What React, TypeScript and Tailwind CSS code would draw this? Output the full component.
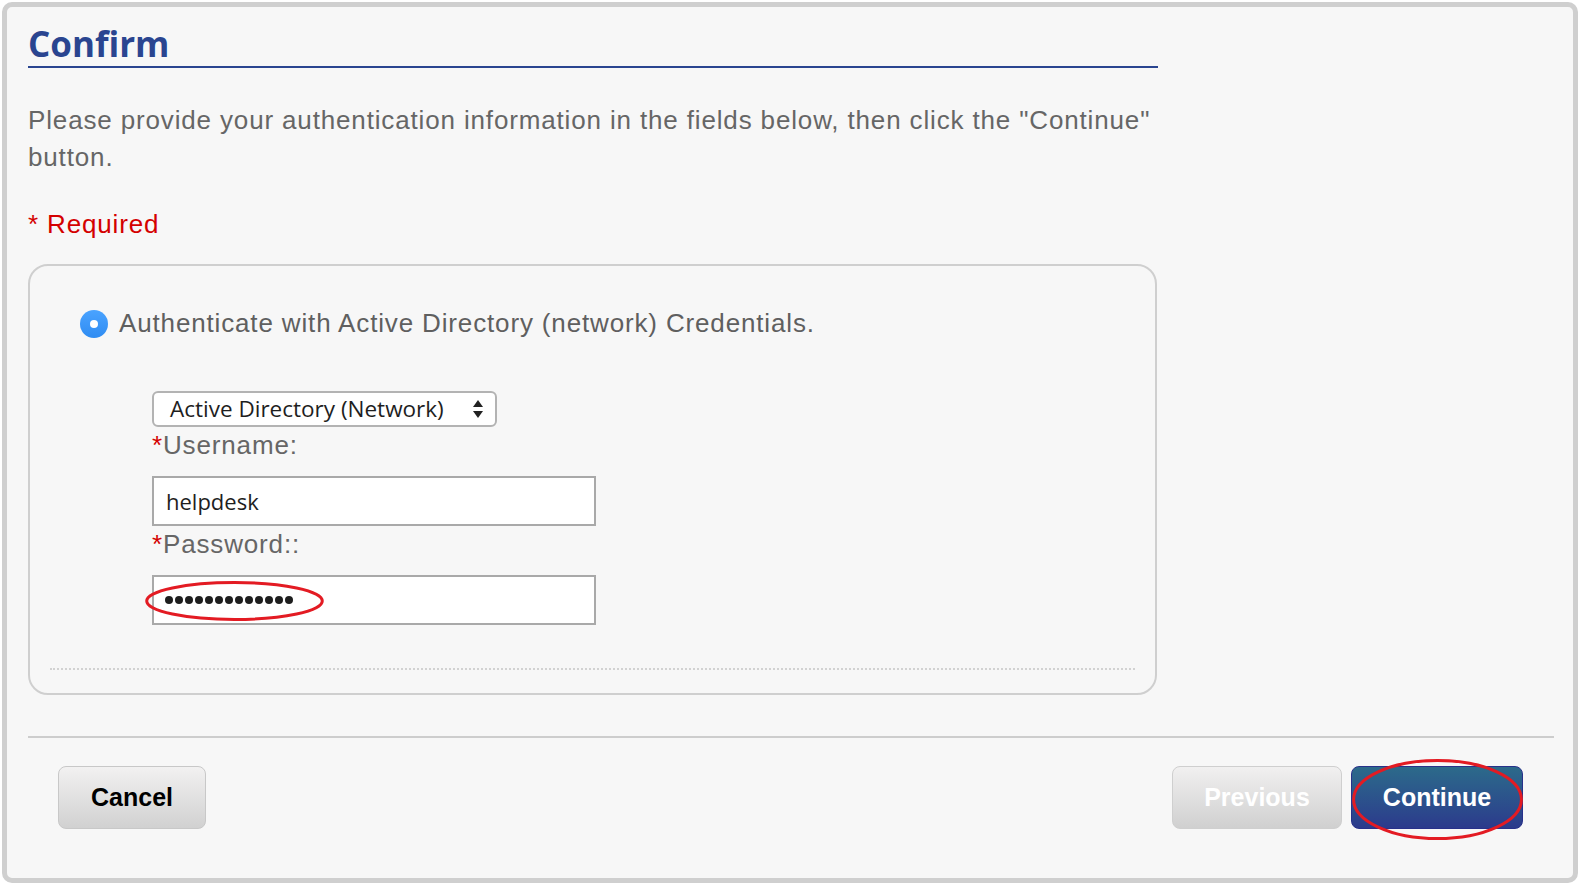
import React from 'react';

const Ellipse: React.FC<{ className: string }> = ({ className }) => (
  <svg className={`pointer-events-none absolute ${className}`} viewBox="0 0 100 100" preserveAspectRatio="none" fill="none">
    <ellipse cx="50" cy="50" rx="48.5" ry="46" stroke="#e31b23" strokeWidth="3" vectorEffect="non-scaling-stroke" />
  </svg>
);

const App: React.FC = () => {
  const dots = Array.from({ length: 13 });

  return (
    <div className="h-screen w-full bg-white pt-[2px] pl-[2px] pr-[4px] pb-[3px] font-['Liberation_Sans',Arial,sans-serif]">
      <div className="h-full rounded-[10px] border-[5px] border-[#cfcfcf] bg-[#f7f7f7] pl-[21px] pr-[19px] pt-[17px]">
        <div className="w-[1130px]">
          <h1 className="border-b-2 border-[#2a4590] pb-[2px] font-['Open_Sans',sans-serif] text-[35px] font-bold leading-[40px] text-[#2a4590]">
            Confirm
          </h1>

          <p className="mt-[34px] text-[26px] leading-[37px] tracking-[0.85px] text-[#666]">
            Please provide your authentication information in the fields below, then click the "Continue" button.
          </p>

          <p className="mt-[30px] text-[26px] leading-[37px] tracking-[0.85px] text-[#d40000]">* Required</p>

          {/* auth method box */}
          <div className="mt-[21px] h-[431px] w-[1129px] rounded-[20px] border-2 border-[#cfcfcf] pt-[39px] pb-[20px]">
            <label className="flex h-[37px] items-center gap-[11px] pl-[50px] text-[26px] leading-[37px] tracking-[0.85px] text-[#5f5f5f]">
              <span className="flex h-[28px] w-[28px] items-center justify-center rounded-full bg-gradient-to-b from-[#4aa3ff] to-[#2f8cf2]">
                <span className="h-[8px] w-[8px] rounded-full bg-white" />
              </span>
              Authenticate with Active Directory (network) Credentials.
            </label>

            <div className="mt-[49px] pl-[122px]">
              <div className="flex h-[36px] w-[345px] items-center justify-between rounded-[6px] border-2 border-[#b3b3b3] bg-white pl-[16px] pr-[12px] font-['Open_Sans',sans-serif] text-[22.5px] text-[#1e1e1e]">
                <span>Active Directory (Network)</span>
                <svg width="10" height="20" viewBox="0 0 10 20" className="text-[#222]">
                  <path d="M5 1 L10 8 L0 8 Z" fill="currentColor" />
                  <path d="M0 12 L10 12 L5 19 Z" fill="currentColor" />
                </svg>
              </div>

              <div className="text-[26px] leading-[37px] tracking-[0.85px] text-[#666]">
                <span className="text-[#d40000]">*</span>Username:
              </div>
              <div className="mt-[12px] flex h-[50px] w-[444px] items-center border-2 border-[#a9a9a9] bg-white pl-[12px] font-['Open_Sans',sans-serif] text-[22px] text-[#1e1e1e]">
                helpdesk
              </div>

              <div className="text-[26px] leading-[37px] tracking-[0.85px] text-[#666]">
                <span className="text-[#d40000]">*</span>Password::
              </div>
              <div className="relative mt-[12px] flex h-[50px] w-[444px] items-center gap-[2px] border-2 border-[#a9a9a9] bg-white pl-[11px]">
                {dots.map((_, i) => (
                  <span key={i} className="h-[8px] w-[8px] rounded-full bg-[#1e1e1e]" />
                ))}
                <Ellipse className="-left-[10px] top-[4px] h-[40px] w-[181px]" />
              </div>
            </div>

            <div className="mx-[20px] mt-[43px] border-t-2 border-dotted border-[#d2d2d2]" />
          </div>
        </div>

        <div className="mt-[41px] w-[1526px] border-t-2 border-[#cdcdcd]" />

        <div className="mt-[28px] flex w-[1526px] items-center justify-between pl-[30px] pr-[31px]">
          <button className="h-[63px] w-[148px] rounded-[8px] border border-[#c8c8c8] bg-gradient-to-b from-[#f2f1f1] to-[#d1d1d1] text-[25px] font-bold text-black">
            Cancel
          </button>
          <div className="flex gap-[9px]">
            <button className="h-[63px] w-[170px] rounded-[8px] border border-[#cfcfcf] bg-gradient-to-b from-[#f1f0f0] to-[#d0d0d0] text-[25px] font-bold text-white">
              Previous
            </button>
            <button className="relative h-[63px] w-[172px] rounded-[8px] border border-[#28318a] bg-gradient-to-b from-[#2c6a8a] to-[#2c3a8c] text-[25px] font-bold text-white">
              Continue
              <Ellipse className="-left-[1px] -top-[10px] h-[85px] w-[173px]" />
            </button>
          </div>
        </div>
      </div>
    </div>
  );
};

export default App;
